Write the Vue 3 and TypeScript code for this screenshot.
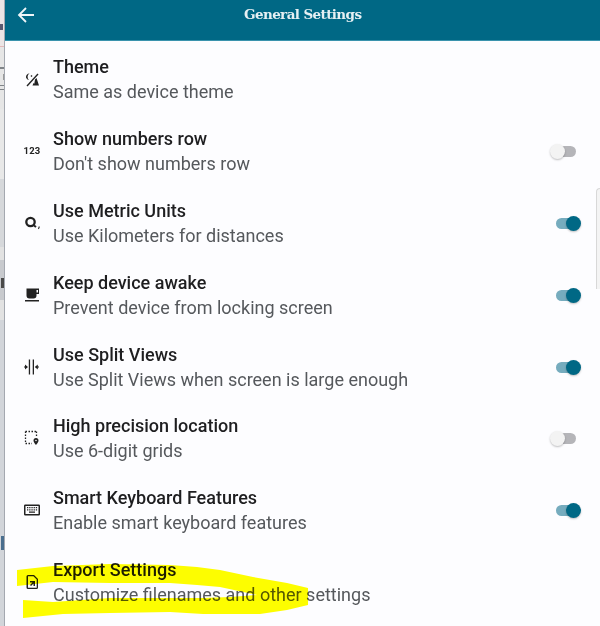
<template>
  <div class="screen">
    <div class="backdrop">
      <span v-for="b in backdrop" :key="b.top" class="patch" :style="{ top: b.top + 'px', height: b.height + 'px', background: b.color, left: (b.left ?? 0) + 'px', width: (b.width ?? 4) + 'px' }"></span>
    </div>
    <div class="panel">
      <header class="appbar">
        <svg class="back" width="24" height="24" viewBox="0 0 24 24" fill="none" stroke="#eef6f9" stroke-width="1.800">
          <path d="M20 12H5M12 5l-7 7 7 7" />
        </svg>
        <h1>General Settings</h1>
      </header>
      <ul class="list">
        <li v-for="item in items" :key="item.title" class="row">
          <span class="icon">
            <svg v-if="item.icon === 'theme'" width="18" height="18" viewBox="0 0 18 18" fill="#222">
              <path d="M3.500 15.500 14.500 3.500l1 .9-11 12z" />
              <path d="M6.500 3.500a3.500 3.500 0 0 0-3.500 4 3.500 3.500 0 0 0 3 2.500 4 4 0 0 1 .5-6.500z" />
              <path d="M12 9.500l1.500-1.600 2.500 7.600H9.500l1-2.500.8.800z" />
              <path d="M8.500 5l1 1-1 1-1-1z" />
            </svg>
            <span v-else-if="item.icon === 'numbers'" class="num">123</span>
            <svg v-else-if="item.icon === 'metric'" width="18" height="18" viewBox="0 0 18 18" fill="none" stroke="#222">
              <circle cx="7.500" cy="8" r="4.200" stroke-width="2.300" />
              <path d="M11 11.500l2 1.500" stroke-width="2" />
              <path d="M16 12.500c.3 1 0 1.800-.8 2.300" stroke-width="1.200" />
            </svg>
            <svg v-else-if="item.icon === 'coffee'" width="18" height="18" viewBox="0 0 18 18" fill="#222">
              <path d="M3.500 2.500H16v5.500h-2.500v1.500a3 3 0 0 1-3 3h-4a3 3 0 0 1-3-3zM13.500 4v2.500H15V4zM2 14h14v1.500H2z" fill-rule="evenodd" />
            </svg>
            <svg v-else-if="item.icon === 'split'" width="18" height="18" viewBox="0 0 18 18" fill="#222">
              <path d="M5.800 1.500h1.300v15H5.800zM9.700 1.500H11v15H9.700zM5 9 2 6.500v5zM11.800 9l3 -2.500v5z" />
              <path d="M14 8.400h2v1.200h-2zM1 8.400h2v1.200H1z" />
            </svg>
            <svg v-else-if="item.icon === 'location'" width="18" height="18" viewBox="0 0 18 18" fill="none" stroke="#222">
              <path d="M2.500 2.500h10.500M2.500 2.500V13M2.500 14.500H9M13.500 2.500V8" stroke-width="1.300" stroke-dasharray="1.500 1.500" />
              <path d="M13 9a2.500 2.500 0 0 0-2.500 2.500c0 1.800 2.500 4.500 2.500 4.500s2.500-2.700 2.500-4.500A2.500 2.500 0 0 0 13 9zm0 1.700a.8.800 0 1 1 0 1.600.8.800 0 0 1 0-1.600z" fill="#222" stroke="none" fill-rule="evenodd" />
            </svg>
            <svg v-else-if="item.icon === 'keyboard'" width="18" height="18" viewBox="0 0 18 18" fill="#222">
              <path d="M2.300 3.500h13.400a1.300 1.300 0 0 1 1.300 1.300v8.400a1.300 1.300 0 0 1-1.300 1.300H2.300A1.300 1.300 0 0 1 1 13.200V4.800a1.300 1.300 0 0 1 1.300-1.300zm.2 1.500v8h13V5z" fill-rule="evenodd" />
              <path d="M4 6h1.300v1.300H4zM6.200 6h1.300v1.300H6.200zM8.400 6h1.300v1.300H8.400zM10.600 6h1.300v1.300h-1.300zM12.800 6h1.300v1.300h-1.300zM4 8.300h1.300v1.300H4zM6.200 8.300h1.300v1.300H6.200zM8.400 8.300h1.300v1.300H8.400zM10.600 8.300h1.300v1.300h-1.300zM12.800 8.300h1.300v1.300h-1.300zM6 10.600h6v1.200H6z" />
            </svg>
            <svg v-else width="18" height="18" viewBox="0 0 18 18" fill="#222">
              <path d="M5 2h6l4 4v8.500A1.500 1.500 0 0 1 13.500 16h-8.500A1.500 1.500 0 0 1 3.500 14.500v-11A1.500 1.500 0 0 1 5 2zm0 1.300v11.400h8.700V6.600L10.400 3.300z" fill-rule="evenodd" />
              <path d="M7 8h5v5h-1.500v-2.500L8 13 7 12l2.500-2.500H7z" />
            </svg>
          </span>
          <div class="text">
            <div class="title">{{ item.title }}</div>
            <div class="sub">{{ item.sub }}</div>
          </div>
          <span v-if="item.on !== undefined" class="toggle" :class="{ on: item.on }"><i></i></span>
        </li>
      </ul>
      <svg class="marker" width="600" height="80" viewBox="0 0 600 80">
        <path d="M17 24 53 20 110 18 170 19 197 21 220 24 253 31 287 37 308 42V59L287 64 260 68H203L170 66 110 67 63 68 23 72V54L53 56 110 52H203L230 51 257 49 220 41 197 39 170 37H110L53 36 17 40z" fill="#ffff00" />
      </svg>
    </div>
    <span class="edge"></span>
  </div>
</template>

<script setup lang="ts">
interface SettingRow {
  icon: string
  title: string
  sub: string
  on?: boolean
}

interface BackdropPatch {
  top: number
  height: number
  color: string
  left?: number
  width?: number
}

const items: SettingRow[] = [
  { icon: 'theme', title: 'Theme', sub: 'Same as device theme' },
  { icon: 'numbers', title: 'Show numbers row', sub: "Don't show numbers row", on: false },
  { icon: 'metric', title: 'Use Metric Units', sub: 'Use Kilometers for distances', on: true },
  { icon: 'coffee', title: 'Keep device awake', sub: 'Prevent device from locking screen', on: true },
  { icon: 'split', title: 'Use Split Views', sub: 'Use Split Views when screen is large enough', on: true },
  { icon: 'location', title: 'High precision location', sub: 'Use 6-digit grids', on: false },
  { icon: 'keyboard', title: 'Smart Keyboard Features', sub: 'Enable smart keyboard features', on: true },
  { icon: 'export', title: 'Export Settings', sub: 'Customize filenames and other settings' },
]

// bits of the window behind the panel, visible in the strip on the left
const backdrop: BackdropPatch[] = [
  { top: 0, height: 46, color: '#ebe5e5' },
  { top: 24, height: 6, color: '#5a5a70', left: 0, width: 3 },
  { top: 46, height: 1, color: '#e2b8b8' },
  { top: 47, height: 62, color: '#e6e6e6' },
  { top: 67, height: 2, color: '#808488' },
  { top: 74, height: 6, color: '#9a9a9a', left: 3, width: 1 },
  { top: 85, height: 1, color: '#808488' },
  { top: 89, height: 1, color: '#808488' },
  { top: 109, height: 70, color: '#e8e8e8' },
  { top: 179, height: 68, color: '#d6d8db' },
  { top: 260, height: 40, color: '#c8cace' },
  { top: 278, height: 10, color: '#4a4a4a', left: 1, width: 3 },
  { top: 320, height: 306, color: '#d2d5da' },
  { top: 536, height: 14, color: '#4a6e8e', left: 1, width: 3 },
]
</script>

<style>
html, body {
  margin: 0;
  background: #fdfdff;
}
</style>

<style scoped>
.screen {
  position: relative;
  width: 600px;
  height: 626px;
  overflow: hidden;
  font-family: Roboto, "Liberation Sans", sans-serif;
}
.backdrop {
  position: absolute;
  left: 0;
  top: 0;
  width: 4px;
  height: 626px;
  background: #e2e2e2;
}
.patch {
  position: absolute;
}
.panel {
  position: relative;
  margin-left: 4px;
  height: 626px;
  background: #fdfdff;
  border-left: 1px solid #a4a8b0;
}
.appbar {
  height: 40px;
  background: #006885;
  border-bottom: 1px solid #3a93ad;
  display: flex;
  align-items: center;
  position: relative;
}
.back {
  margin-left: 9px;
  margin-top: -11px;
}
.appbar h1 {
  position: absolute;
  left: 239px;
  top: 5px;
  margin: 0;
  font: bold 13.500px/18px "DejaVu Serif", serif;
  letter-spacing: -0.6px;
  color: #e6f0f3;
}
.list {
  list-style: none;
  margin: 0;
  padding: 0;
  position: relative;
  z-index: 1;
}
.row {
  box-sizing: border-box;
  height: 71.800px;
  padding-top: 5px;
  display: flex;
  align-items: center;
  position: relative;
}
.icon {
  width: 18px;
  height: 18px;
  margin-left: 18px;
  display: flex;
  align-items: center;
  justify-content: center;
  flex: none;
}
.num {
  font: 700 9.500px/18px Roboto, sans-serif;
  color: #222;
  letter-spacing: .2px;
}
.text {
  margin-left: 12px;
}
.title {
  font-size: 18px;
  font-weight: 500;
  line-height: 25px;
  color: #1e1e20;
}
.sub {
  font-size: 18px;
  line-height: 25px;
  color: #55585c;
}
.toggle {
  position: absolute;
  left: 548px;
  top: 50%;
  margin-top: -2.500px;
  width: 23px;
  height: 11px;
  border-radius: 6px;
  background: #b5b5b9;
}
.toggle i {
  position: absolute;
  left: -3px;
  top: -2px;
  width: 15px;
  height: 15px;
  border-radius: 50%;
  background: #f3f3f3;
  box-shadow: 0 1px 2px rgba(0, 0, 0, .25);
}
.toggle.on {
  left: 551px;
  background: #76acbe;
}
.toggle.on i {
  left: 10px;
  background: #006885;
}
.marker {
  position: absolute;
  left: -5px;
  top: 546px;
  z-index: 2;
  mix-blend-mode: multiply;
}
.edge {
  position: absolute;
  right: 0;
  top: 188px;
  width: 3px;
  height: 100px;
  background: #f4f4f4;
  border-left: 1px solid #d8d8d8;
  border-top: 1px solid #d8d8d8;
  border-top-left-radius: 4px;
}
</style>
